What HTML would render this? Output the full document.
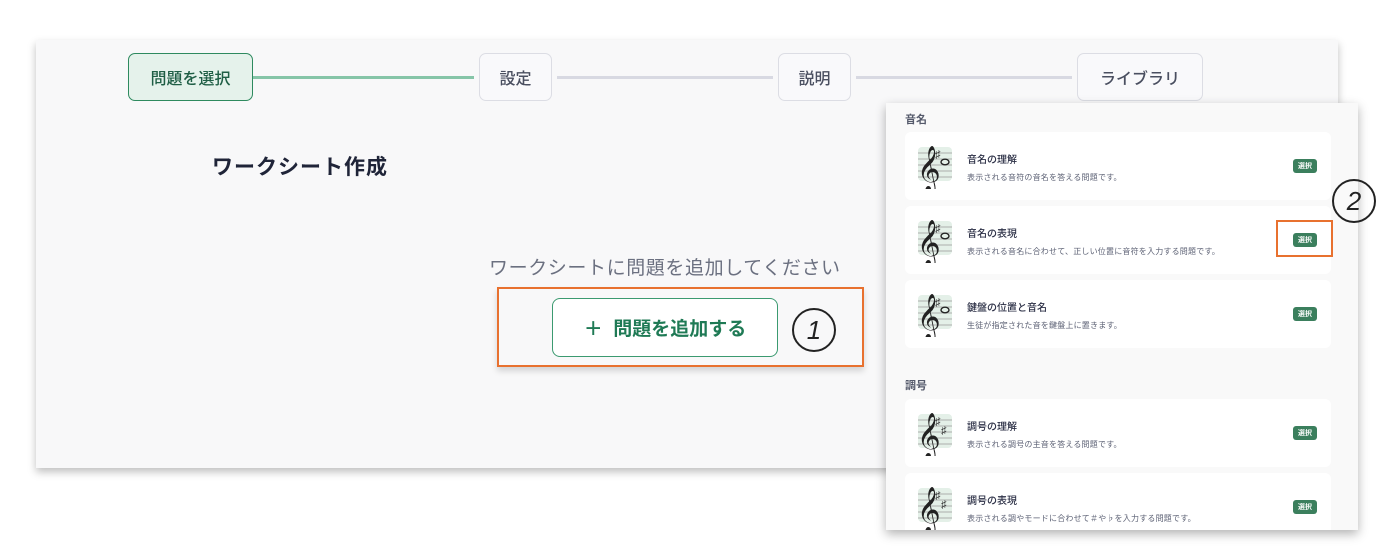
<!DOCTYPE html>
<html><head><meta charset="utf-8"><style>
*{box-sizing:border-box;margin:0;padding:0}
body{width:1400px;height:560px;background:#fff;position:relative;overflow:hidden;font-family:"Liberation Sans","Noto Sans CJK JP",sans-serif}
.abs{position:absolute}
#main{left:36px;top:40px;width:1302px;height:428px;background:#f8f8f9;box-shadow:0 4px 8px rgba(0,0,0,.25)}
.step{position:absolute;top:53px;height:48px;border:1.5px solid #dcdde4;border-radius:7px;background:#f9f9fb;color:#4a4f60;font-size:16px;font-weight:500;display:flex;align-items:center;justify-content:center}
.line{position:absolute;top:76px;height:3px;background:#d8d9e2}
#panel{left:886px;top:103px;width:472px;height:427px;background:#f9f9f9;box-shadow:0 4px 10px rgba(0,0,0,.3);overflow:hidden}
.card{position:absolute;left:19px;width:426px;height:68px;background:#fff;border-radius:6px}
.card .t{position:absolute;left:62px;top:19px;font-size:10px;color:#2b2f45;font-weight:500}
.card .d{position:absolute;left:62px;top:40px;font-size:8px;letter-spacing:.2px;color:#5d6275}
.card .b{position:absolute;left:388px;top:27px;width:24px;height:14px;background:#3b7f5d;border-radius:3px;color:#fff;font-size:7px;display:flex;align-items:center;justify-content:center;font-weight:bold}
.card svg{position:absolute;left:13px;top:13px}
.lab{position:absolute;left:19px;font-size:11px;font-weight:bold;color:#555a6b}
.circ{position:absolute;width:44px;height:44px;border:2px solid #222;border-radius:50%;font-size:26px;font-style:italic;display:flex;align-items:center;justify-content:center;color:#222}
</style></head><body>
<div id="main" class="abs"></div>
<div class="line" style="left:253px;width:221px;background:#86c5a8"></div>
<div class="line" style="left:557px;width:216px"></div>
<div class="line" style="left:856px;width:216px"></div>
<div class="step" style="left:128px;width:125px;border-color:#2e8a5f;background:#e5f2eb;color:#1f5e45">問題を選択</div>
<div class="step" style="left:479px;width:73px">設定</div>
<div class="step" style="left:778px;width:73px">説明</div>
<div class="step" style="left:1077px;width:126px">ライブラリ</div>
<div class="abs" style="left:212px;top:151px;font-size:21px;letter-spacing:1px;font-weight:bold;color:#1f2438">ワークシート作成</div>
<div class="abs" style="left:489px;top:253px;font-size:19px;letter-spacing:0.6px;color:#6b7080">ワークシートに問題を追加してください</div>
<div class="abs" style="left:497px;top:287px;width:367px;height:80px;border:2px solid #e8712f;box-shadow:0 4px 6px rgba(0,0,0,.15)"></div>
<div class="abs" style="left:552px;top:298px;width:226px;height:59px;border:1.5px solid #3b9a70;border-radius:8px;background:#fff;color:#1f7a55;font-size:19px;font-weight:bold;display:flex;align-items:center;justify-content:center">＋&nbsp;&nbsp;問題を追加する</div>
<div class="circ" style="left:792px;top:308px">1</div>
<div id="panel" class="abs">
<div class="lab" style="top:8px">音名</div>
<div class="lab" style="top:274px">調号</div>
</div>
<div class="circ" style="left:1332px;top:179px">2</div>
<script>
const p=document.getElementById('panel');
const cards=[[29,'音名の理解','表示される音符の音名を答える問題です。',1],[103,'音名の表現','表示される音名に合わせて、正しい位置に音符を入力する問題です。',1],[177,'鍵盤の位置と音名','生徒が指定された音を鍵盤上に置きます。',1],[296,'調号の理解','表示される調号の主音を答える問題です。',0],[370,'調号の表現','表示される調やモードに合わせて＃や♭を入力する問題です。',0]];
for(const [y,t,d,n] of cards){
 const c=document.createElement('div');c.className='card';c.style.top=y+'px';
 let lines='';for(let i=0;i<5;i++)lines+=`<line x1="0" x2="34" y1="${8+i*6}" y2="${8+i*6}" stroke="#999" stroke-width="0.8"/>`;
 c.innerHTML=`<svg width="36" height="44" viewBox="0 0 36 44"><rect x="0" y="2" width="34" height="34" rx="4" fill="#e4f0e8"/>${lines}<text x="-1" y="37" font-size="40" fill="#222" font-family="DejaVu Sans">𝄞</text><text x="17" y="13" font-size="11" fill="#333">♯</text>${n?'<ellipse cx="27" cy="17" rx="4" ry="2.8" fill="none" stroke="#222" stroke-width="1.4"/>':'<text x="23" y="22" font-size="11" fill="#333">♯</text>'}</svg><div class="t">${t}</div><div class="d">${d}</div><div class="b">選択</div>`;
 p.appendChild(c);
}
</script>
<div class="abs" style="left:1276px;top:220px;width:57px;height:37px;border:2px solid #e8712f"></div>
</body></html>
